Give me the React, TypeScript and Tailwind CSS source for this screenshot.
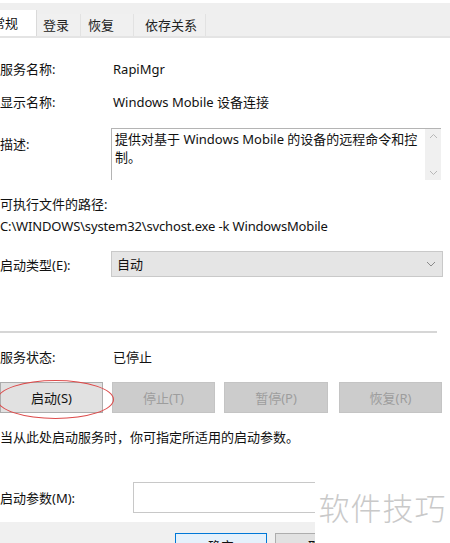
import React from "react";

const font = {
  fontFamily: '"Noto Sans", "Noto Sans CJK SC", sans-serif',
};

const Tab: React.FC<{ label: string; width: string; pad?: string; active?: boolean }> = ({
  label,
  width,
  pad,
  active,
}) => (
  <div
    className={
      active
        ? `${width} h-[26px] bg-white flex items-center pt-[2px] border-r border-[#dadada] text-[13px] text-[#111]`
        : `${width} ${pad} h-[22px] mt-[4px] bg-[#f0f0f0] flex items-center pt-[2px] border-r border-[#e2e2e2] text-[13px] text-[#222]`
    }
  >
    {active ? <span className="-ml-[8px]">{label}</span> : label}
  </div>
);

const ActionButton: React.FC<{ label: string; enabled?: boolean; width: string }> = ({
  label,
  enabled,
  width,
}) => (
  <div
    className={
      enabled
        ? `${width} h-[31px] bg-[#e1e1e1] border border-[#adadad] flex items-center justify-center text-[13px] text-[#111]`
        : `${width} h-[31px] bg-[#cccccc] border border-[#c4c4c4] flex items-center justify-center text-[13px] text-[#9d9d9d]`
    }
  >
    {label}
  </div>
);

export default function App() {
  return (
    <div className="relative w-[450px] h-[543px] overflow-hidden bg-white" style={font}>
      {/* Tab strip */}
      <div className="mt-[3px] h-[35px] bg-[#efefef] border-b-[2px] border-[#e4e4e4] flex items-end">
        <div className="flex items-end h-full">
          <Tab label="常规" width="w-[37px]" active />
          <Tab label="登录" width="w-[44px]" pad="pl-[6px]" />
          <Tab label="恢复" width="w-[53px]" pad="pl-[7px]" />
          <Tab label="依存关系" width="w-[72px]" pad="pl-[11px]" />
        </div>
      </div>

      <div className="text-[13px] leading-[18px] text-[#111]">
        {/* Service name */}
        <div className="flex mt-[22px]">
          <div className="w-[113px]">服务名称:</div>
          <div>RapiMgr</div>
        </div>

        {/* Display name */}
        <div className="flex mt-[15px]">
          <div className="w-[113px]">显示名称:</div>
          <div>Windows Mobile 设备连接</div>
        </div>

        {/* Description */}
        <div className="flex mt-[17px]">
          <div className="w-[111px] pt-[7px]">描述:</div>
          <div className="w-[330px] h-[52px] flex border-t border-l border-[#b4b4b4]">
            <div className="flex-1 pl-[3px] pt-[1px] leading-[18px]">
              提供对基于 Windows Mobile 的设备的远程命令和控
              <br />
              制。
            </div>
            <div className="w-[16px] bg-[#f0f0f0] flex flex-col items-center justify-between py-[4px] text-[#b8b8b8]">
              <svg width="9" height="6" viewBox="0 0 9 6">
                <path d="M1 5 L4.5 1.5 L8 5" fill="none" stroke="currentColor" strokeWidth="1" />
              </svg>
              <svg width="9" height="6" viewBox="0 0 9 6">
                <path d="M1 1 L4.5 4.5 L8 1" fill="none" stroke="currentColor" strokeWidth="1" />
              </svg>
            </div>
          </div>
        </div>

        {/* Path */}
        <div className="mt-[15px]">可执行文件的路径:</div>
        <div className="mt-[4px] tracking-[-0.15px]">C:\WINDOWS\system32\svchost.exe -k WindowsMobile</div>

        {/* Startup type */}
        <div className="flex items-center mt-[16px]">
          <div className="w-[111px] pt-[2px]">启动类型(E):</div>
          <div className="w-[332px] h-[26px] bg-[#e5e5e5] border border-[#c9c9c9] flex items-center justify-between pl-[5px] pr-[6px]">
            <span>自动</span>
            <svg width="10" height="6" viewBox="0 0 10 6" className="text-[#8a8a8a]">
              <path d="M1 1 L5 5 L9 1" fill="none" stroke="currentColor" strokeWidth="1" />
            </svg>
          </div>
        </div>

        {/* Separator */}
        <div className="mt-[54px] w-[437px] h-[2px] bg-[#d6d6d6]" />

        {/* Service status */}
        <div className="flex mt-[15px]">
          <div className="w-[113px]">服务状态:</div>
          <div>已停止</div>
        </div>

        {/* Buttons */}
        <div className="flex mt-[16px]">
          <ActionButton label="启动(S)" enabled width="w-[103px]" />
          <div className="ml-[9px]">
            <ActionButton label="停止(T)" width="w-[103px]" />
          </div>
          <div className="ml-[9px]">
            <ActionButton label="暂停(P)" width="w-[104px]" />
          </div>
          <div className="ml-[11px]">
            <ActionButton label="恢复(R)" width="w-[103px]" />
          </div>
        </div>

        {/* Hint */}
        <div className="mt-[15px]">当从此处启动服务时，你可指定所适用的启动参数。</div>

        {/* Start params */}
        <div className="flex items-center mt-[36px]">
          <div className="w-[133px]">启动参数(M):</div>
          <div className="w-[309px] h-[31px] bg-white border border-[#c8c8c8]" />
        </div>

        {/* Footer */}
        <div className="mt-[9px] h-[30px] bg-[#f0f0f0] flex pl-[175px] pt-[11px]">
          <div className="w-[92px] h-[26px] border border-[#0078d7] bg-[#e5f1fb] flex items-center justify-center">
            确定
          </div>
          <div className="ml-[8px] w-[92px] h-[26px] border border-[#adadad] bg-[#e1e1e1] flex items-center justify-center">
            取消
          </div>
        </div>
      </div>

      {/* Red annotation ellipse */}
      <div className="absolute left-[-3px] top-[380px] w-[117px] h-[39px] rounded-[50%] border border-[#dd4b4b]" />

      {/* Watermark */}
      <div className="absolute left-[315px] top-[470px] w-[135px] h-[73px] bg-white flex items-center justify-center">
        <span
          className="text-[31px] leading-none text-[#c9c9c9] tracking-[1px] font-light"
          style={{ fontFamily: '"Noto Sans CJK SC", sans-serif' }}
        >
          软件技巧
        </span>
      </div>
    </div>
  );
}
